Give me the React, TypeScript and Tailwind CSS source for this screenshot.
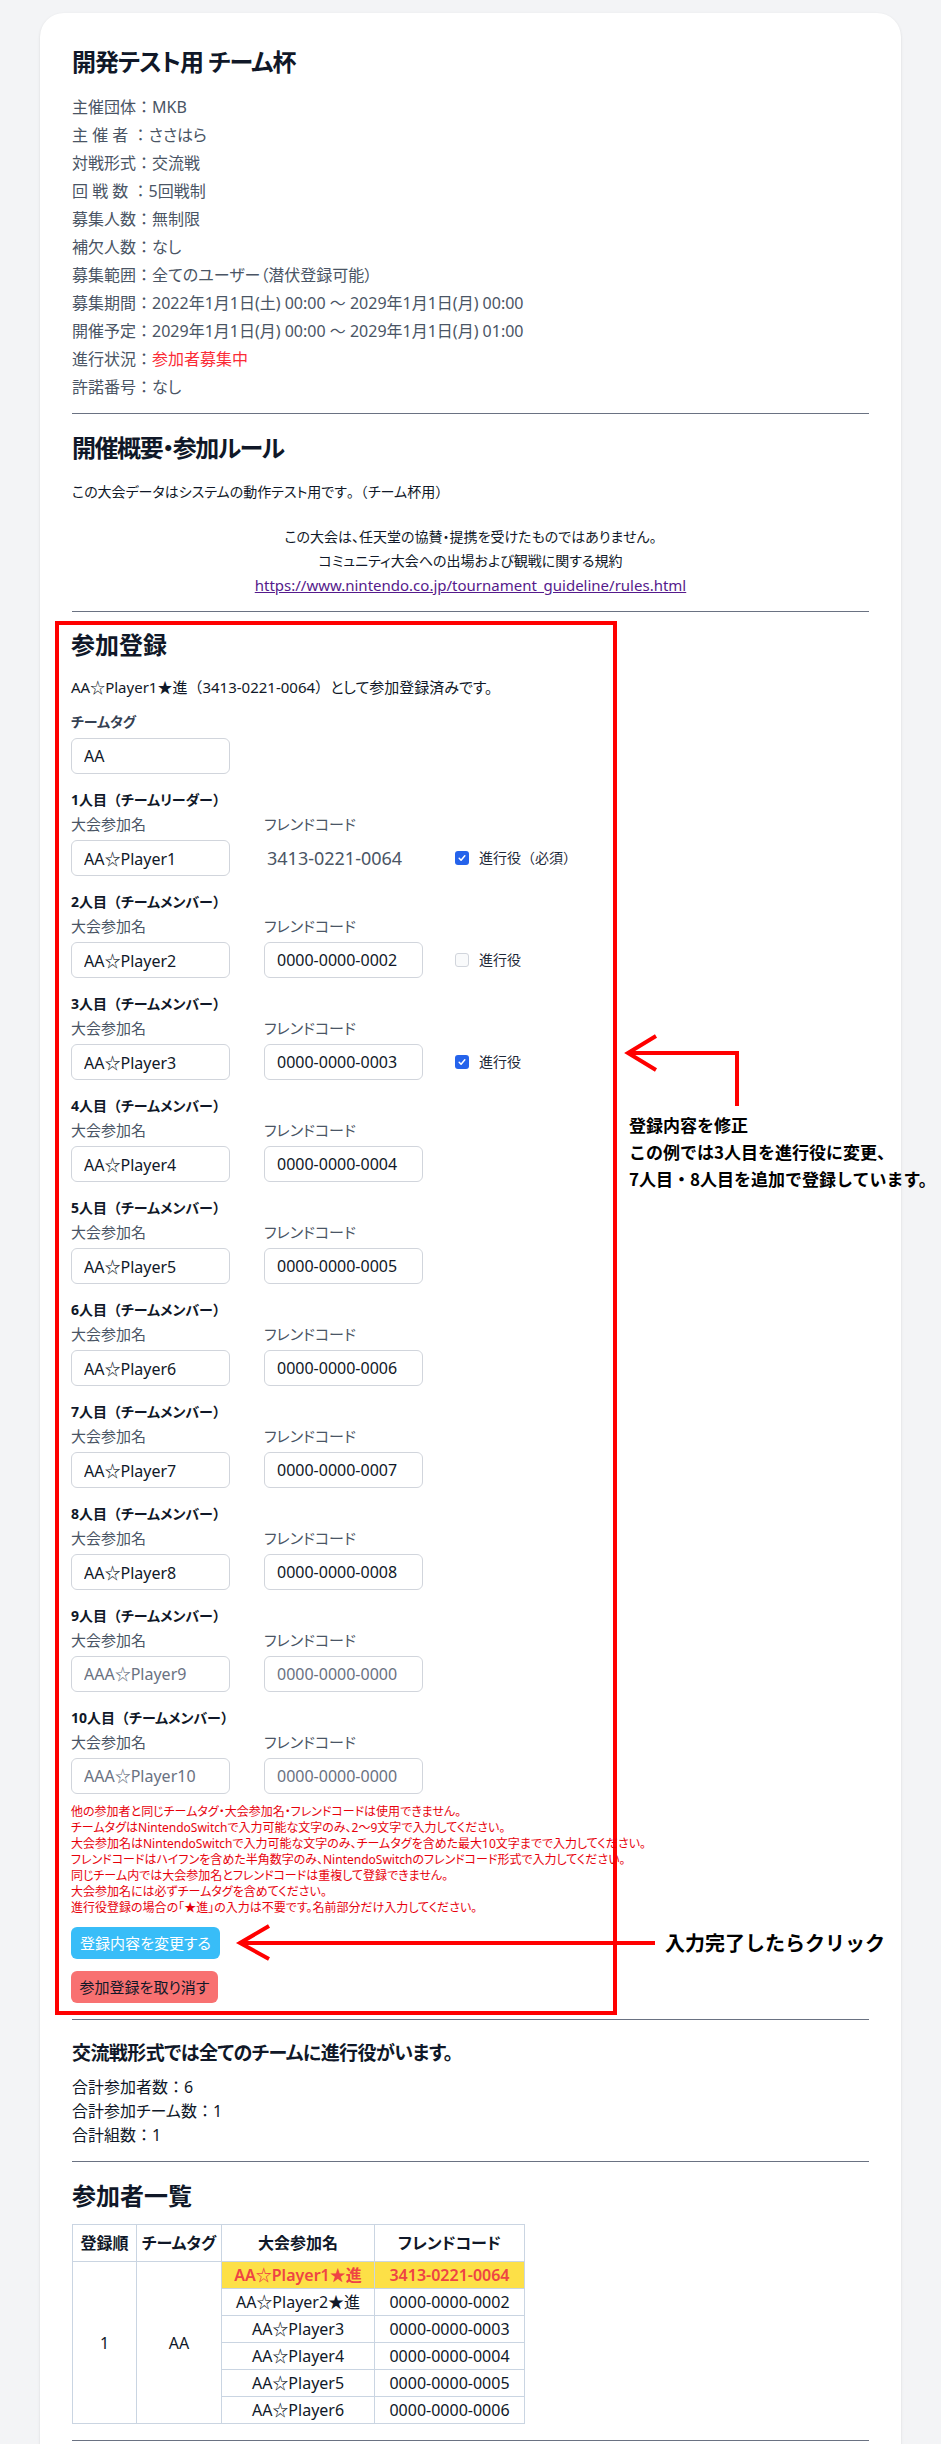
import React from "react";

// 全角のまま表示する約物（palt を外す）
const Fw = ({ children }: { children: React.ReactNode }) => (
  <span className="[font-feature-settings:normal]">{children}</span>
);

const INFO = [
  { k: "主催団体", v: "MKB" },
  { k: "主 催 者 ", v: "ささはら" },
  { k: "対戦形式", v: "交流戦" },
  { k: "回 戦 数 ", v: "5回戦制" },
  { k: "募集人数", v: "無制限" },
  { k: "補欠人数", v: "なし" },
  { k: "募集範囲", v: "全てのユーザー（潜伏登録可能）" },
  { k: "募集期間", v: "2022年1月1日(土) 00:00 ～ 2029年1月1日(月) 00:00" },
  { k: "開催予定", v: "2029年1月1日(月) 00:00 ～ 2029年1月1日(月) 01:00" },
  { k: "進行状況", v: "参加者募集中", red: true },
  { k: "許諾番号", v: "なし" },
];

type Member = {
  no: number;
  name: string;
  code: string;
  placeholder?: boolean;
  fixedCode?: boolean;
  check?: "on" | "off";
  checkLabel?: string;
};

const MEMBERS: Member[] = [
  { no: 1, name: "AA☆Player1", code: "3413-0221-0064", fixedCode: true, check: "on", checkLabel: "必須" },
  { no: 2, name: "AA☆Player2", code: "0000-0000-0002", check: "off" },
  { no: 3, name: "AA☆Player3", code: "0000-0000-0003", check: "on" },
  { no: 4, name: "AA☆Player4", code: "0000-0000-0004" },
  { no: 5, name: "AA☆Player5", code: "0000-0000-0005" },
  { no: 6, name: "AA☆Player6", code: "0000-0000-0006" },
  { no: 7, name: "AA☆Player7", code: "0000-0000-0007" },
  { no: 8, name: "AA☆Player8", code: "0000-0000-0008" },
  { no: 9, name: "AAA☆Player9", code: "0000-0000-0000", placeholder: true },
  { no: 10, name: "AAA☆Player10", code: "0000-0000-0000", placeholder: true },
];

const NOTES = [
  "他の参加者と同じチームタグ・大会参加名・フレンドコードは使用できません。",
  "チームタグはNintendoSwitchで入力可能な文字のみ、2～9文字で入力してください。",
  "大会参加名はNintendoSwitchで入力可能な文字のみ、チームタグを含めた最大10文字までで入力してください。",
  "フレンドコードはハイフンを含めた半角数字のみ、NintendoSwitchのフレンドコード形式で入力してください。",
  "同じチーム内では大会参加名とフレンドコードは重複して登録できません。",
  "大会参加名には必ずチームタグを含めてください。",
  "進行役登録の場合の「★進」の入力は不要です。名前部分だけ入力してください。",
];

const ENTRIES = [
  { name: "AA☆Player1★進", code: "3413-0221-0064", me: true },
  { name: "AA☆Player2★進", code: "0000-0000-0002" },
  { name: "AA☆Player3", code: "0000-0000-0003" },
  { name: "AA☆Player4", code: "0000-0000-0004" },
  { name: "AA☆Player5", code: "0000-0000-0005" },
  { name: "AA☆Player6", code: "0000-0000-0006" },
];

const TextInput = ({ value, placeholder }: { value?: string; placeholder?: string }) => (
  <input
    type="text"
    readOnly
    defaultValue={value}
    placeholder={placeholder}
    className="block h-9 w-[159px] rounded-md border border-gray-300 bg-white px-3 text-base text-gray-900 outline-none placeholder:text-gray-500"
  />
);

const CheckMark = ({ on }: { on: boolean }) =>
  on ? (
    <span className="flex h-[14px] w-[14px] items-center justify-center rounded-[3px] bg-[#2563eb]">
      <svg width="10" height="10" viewBox="0 0 16 16" fill="none">
        <path d="M3.5 8.5L6.5 11.5L12.5 4.5" stroke="white" strokeWidth="2.4" strokeLinecap="round" strokeLinejoin="round" />
      </svg>
    </span>
  ) : (
    <span className="h-[14px] w-[14px] rounded-[3px] border border-gray-300 bg-gray-50" />
  );

function MemberRow({ m }: { m: Member }) {
  return (
    <div className="mt-4">
      <p className="text-sm leading-5 font-bold">
        {m.no}人目<Fw>（</Fw>
        {m.no === 1 ? "チームリーダー" : "チームメンバー"}
        <Fw>）</Fw>
      </p>
      <div className="flex">
        <div className="w-[159px]">
          <p className="mt-1 text-[15px] leading-5 text-gray-600">大会参加名</p>
          <div className="mt-1.5">
            {m.placeholder ? <TextInput placeholder={m.name} /> : <TextInput value={m.name} />}
          </div>
        </div>
        <div className="ml-[34px] w-[158px]">
          <p className="mt-1 text-[15px] leading-5 text-gray-600">フレンドコード</p>
          <div className="mt-1.5">
            {m.fixedCode ? (
              <div className="flex h-9 items-center pl-[3px] text-lg text-gray-600">{m.code}</div>
            ) : m.placeholder ? (
              <TextInput placeholder={m.code} />
            ) : (
              <TextInput value={m.code} />
            )}
          </div>
        </div>
        {m.check && (
          <div className="ml-[33px] flex h-9 items-center gap-2.5 self-end text-sm text-gray-800">
            <CheckMark on={m.check === "on"} />
            <span>
              進行役
              {m.checkLabel && (
                <>
                  <Fw>（</Fw>
                  {m.checkLabel}
                  <Fw>）</Fw>
                </>
              )}
            </span>
          </div>
        )}
      </div>
    </div>
  );
}

const cellBase = "border border-slate-300 p-0 text-center";
const cellMe = "border border-slate-300 bg-[#fde047] p-0 text-center font-semibold text-[#ef4444]";

export default function App() {
  return (
    <div className="relative h-[2444px] overflow-hidden bg-[#f3f4f6] px-10 pt-[13px] font-['Noto_Sans','Noto_Sans_CJK_JP',sans-serif] text-gray-900 [font-feature-settings:'palt']">
      <div className="rounded-3xl bg-white px-8 pt-[33px] pb-10 shadow">
        {/* 大会情報 */}
        <h1 className="text-2xl leading-8 font-bold tracking-[-0.04em]">開発テスト用 チーム杯</h1>
        <div className="mt-[15px] text-base leading-7 text-gray-600">
          {INFO.map((row) => (
            <p key={row.k}>
              {row.k}
              <Fw>：</Fw>
              <span className={row.red ? "text-red-500" : ""}>{row.v}</span>
            </p>
          ))}
        </div>
        <hr className="mt-3 border-gray-500" />

        {/* 開催概要 */}
        <h2 className="mt-[18px] text-2xl leading-8 font-bold tracking-[-0.06em]">開催概要・参加ルール</h2>
        <p className="mt-4 text-sm leading-6">
          この大会データはシステムの動作テスト用です<Fw>。（</Fw>チーム杯用<Fw>）</Fw>
        </p>
        <div className="mt-[21px] text-center text-sm leading-6">
          <p>この大会は、任天堂の協賛・提携を受けたものではありません。</p>
          <p>コミュニティ大会への出場および観戦に関する規約</p>
          <a href="#" className="text-[15px] text-[#551a8b] underline">
            https://www.nintendo.co.jp/tournament_guideline/rules.html
          </a>
        </div>
        <hr className="mt-[13px] border-gray-500" />

        {/* 参加登録 */}
        <div className="mt-[9px] -ml-[17px] w-[562px] border-4 border-[#ff0000] px-3 pt-1 pb-2">
          <h2 className="text-2xl leading-8 font-bold">参加登録</h2>
          <p className="mt-4 text-[15px] leading-5">
            AA☆Player1★進<Fw>（</Fw>3413-0221-0064<Fw>）</Fw>として参加登録済みです。
          </p>
          <p className="mt-[15px] text-sm leading-5 font-bold text-gray-700">チームタグ</p>
          <div className="mt-1.5">
            <TextInput value="AA" />
          </div>
          {MEMBERS.map((m) => (
            <MemberRow key={m.no} m={m} />
          ))}
          <div className="mt-2.5 text-xs leading-4 text-red-600">
            {NOTES.map((n) => (
              <p key={n} className="whitespace-nowrap">
                {n}
              </p>
            ))}
          </div>
          <button className="mt-[11px] block h-8 w-[149px] rounded-md bg-[#38bdf8] text-[15px] text-white">
            登録内容を変更する
          </button>
          <button className="mt-3 block h-8 w-[147px] rounded-md bg-[#f87171] text-[15px] text-gray-900">
            参加登録を取り消す
          </button>
        </div>
        <hr className="mt-1 border-gray-500" />

        {/* 集計 */}
        <h3 className="mt-[19px] text-[19px] leading-7 font-bold tracking-[-0.03em]">
          交流戦形式では全てのチームに進行役がいます。
        </h3>
        <div className="mt-2 text-base leading-6">
          <p>
            合計参加者数<Fw>：</Fw>6
          </p>
          <p>
            合計参加チーム数<Fw>：</Fw>1
          </p>
          <p>
            合計組数<Fw>：</Fw>1
          </p>
        </div>
        <hr className="mt-[14px] border-gray-500" />

        {/* 参加者一覧 */}
        <h2 className="mt-[18px] text-2xl leading-8 font-bold">参加者一覧</h2>
        <table className="mt-3 w-[452px] table-fixed border-collapse text-base">
          <colgroup>
            <col className="w-[64px]" />
            <col className="w-[85px]" />
            <col className="w-[153px]" />
            <col className="w-[150px]" />
          </colgroup>
          <thead>
            <tr className="h-[37px]">
              <th className="border border-slate-300 p-0 font-bold">登録順</th>
              <th className="border border-slate-300 p-0 font-bold">チームタグ</th>
              <th className="border border-slate-300 p-0 font-bold">大会参加名</th>
              <th className="border border-slate-300 p-0 font-bold">フレンドコード</th>
            </tr>
          </thead>
          <tbody>
            {ENTRIES.map((e, i) => (
              <tr key={e.name} className="h-[27px]">
                {i === 0 && (
                  <>
                    <td rowSpan={6} className={cellBase}>
                      1
                    </td>
                    <td rowSpan={6} className={cellBase}>
                      AA
                    </td>
                  </>
                )}
                <td className={e.me ? cellMe : cellBase}>{e.name}</td>
                <td className={e.me ? cellMe : cellBase}>{e.code}</td>
              </tr>
            ))}
          </tbody>
        </table>
        <hr className="mt-4 border-gray-500" />
      </div>

      {/* 注釈（赤い矢印と説明） */}
      <svg
        className="pointer-events-none absolute top-0 left-0"
        width="941"
        height="2444"
        fill="none"
        stroke="#ff0000"
        strokeWidth="4"
      >
        <polyline points="737,1106 737,1053 628,1053" />
        <polyline points="656,1036 628,1053 656,1070" />
        <line x1="241" y1="1943" x2="655" y2="1943" />
        <polyline points="269,1926 240,1943 269,1959" />
      </svg>
      <div className="absolute top-[1111px] left-[629px] font-['Noto_Sans_CJK_JP',sans-serif] text-[17px] leading-[27px] font-semibold whitespace-nowrap text-black [font-feature-settings:normal]">
        <p>登録内容を修正</p>
        <p>この例では3人目を進行役に変更、</p>
        <p>7人目・8人目を追加で登録しています。</p>
      </div>
      <div className="absolute top-[1929px] left-[665px] font-['Noto_Sans_CJK_JP',sans-serif] text-[20px] leading-7 font-bold whitespace-nowrap text-black [font-feature-settings:normal]">
        入力完了したらクリック
      </div>
    </div>
  );
}
